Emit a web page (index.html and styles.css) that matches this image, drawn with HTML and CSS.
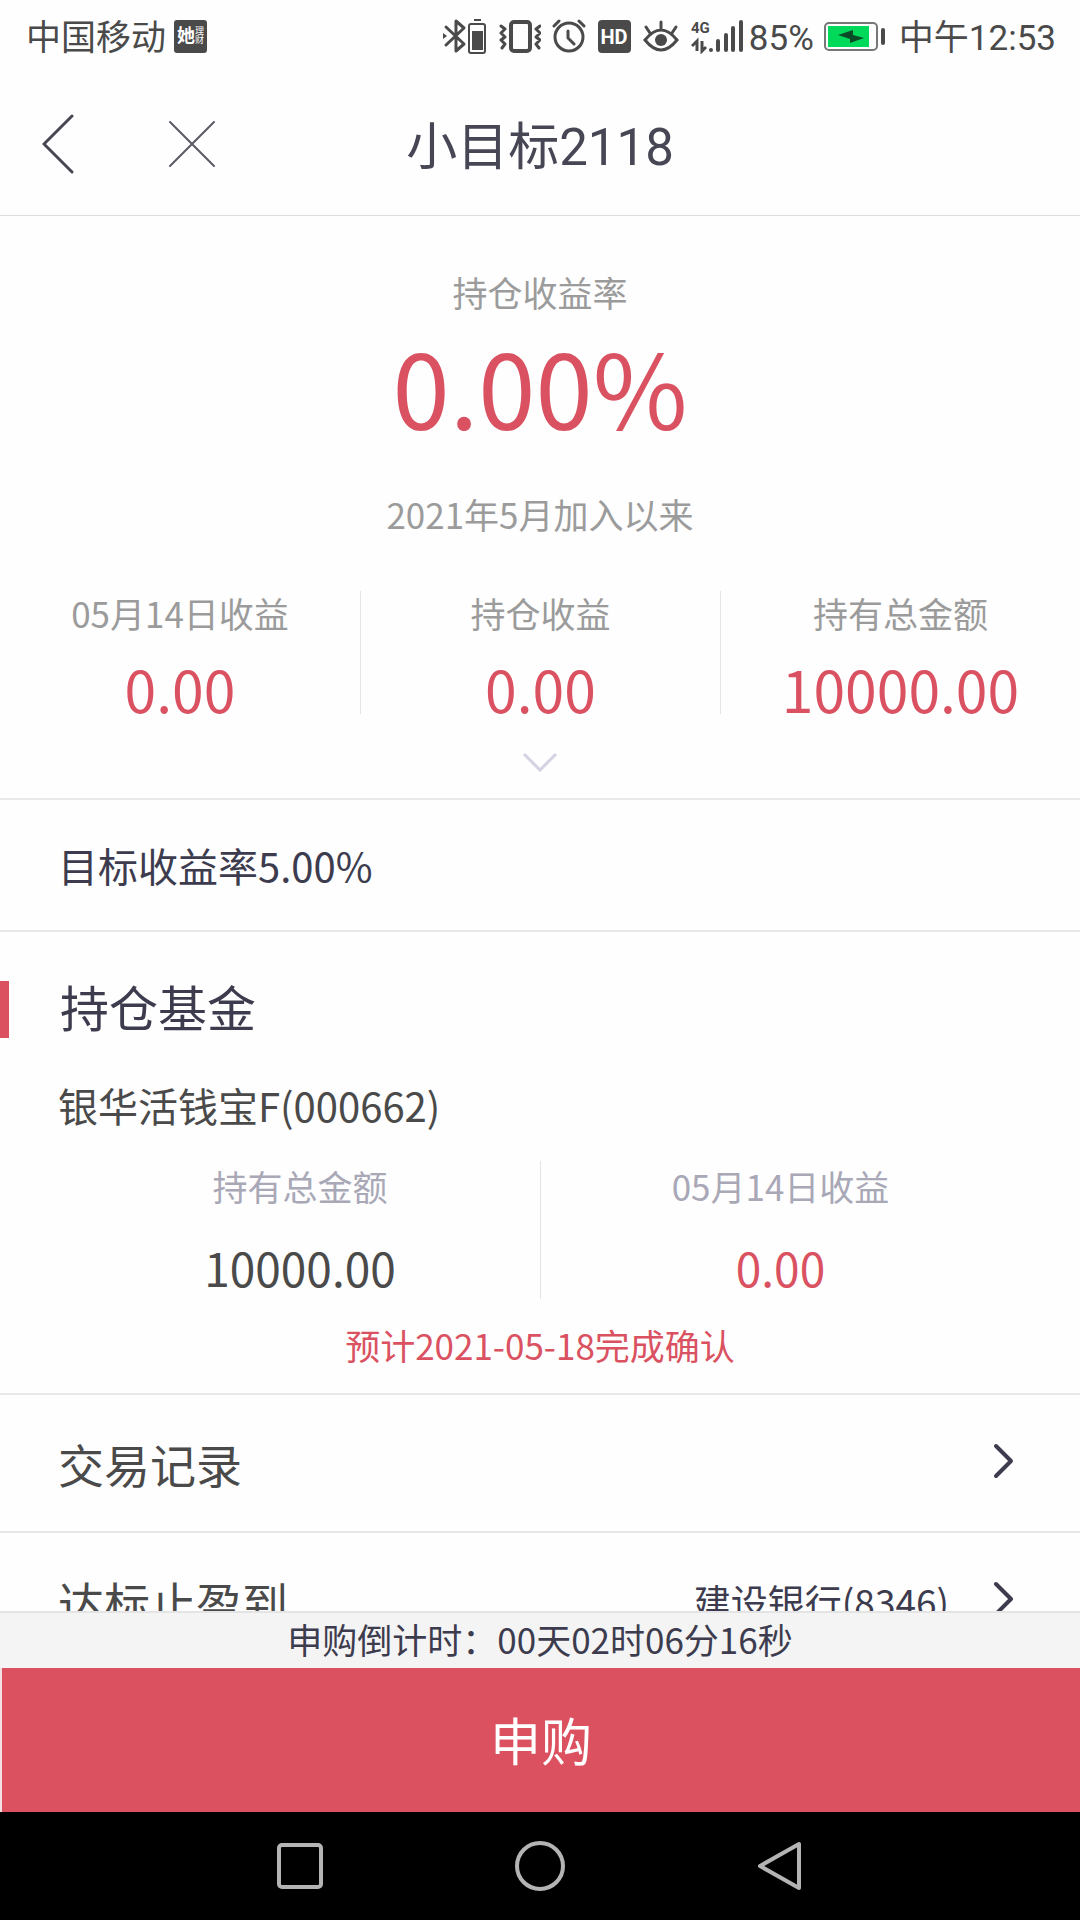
FILE: index.html
```html
<!DOCTYPE html>
<html lang="zh-CN">
<head>
<meta charset="utf-8">
<meta name="viewport" content="width=device-width, initial-scale=1">
<title>小目标2118</title>
<link rel="stylesheet" href="styles.css">
</head>
<body>
<div class="app">
  <div class="status">
    <span>中国移动</span>
    <span class="badge"><b class="badge-main">她</b><span class="badge-side"><span>理</span><span>财</span></span></span>
    <div class="status-icons">
      <svg width="46" height="36" viewBox="0 0 46 36" fill="none" stroke="#4a4a4a">
        <path d="M4 9 22 26 14 33V3L22 10 4 27" stroke-width="3" stroke-linejoin="round" stroke-linecap="round"/>
        <path d="M1 15l4 3-4 3z" fill="#4a4a4a" stroke="none"/>
        <rect x="27" y="6" width="16" height="29" rx="2" stroke-width="2"/>
        <path d="M32 2h7" stroke-width="2"/>
        <path d="M30 13h11v19H30z" fill="#4a4a4a" stroke="none"/>
      </svg>
      <svg width="42" height="36" viewBox="0 0 42 36" fill="none" stroke="#4a4a4a" stroke-width="3" stroke-linecap="round" stroke-linejoin="round">
        <rect x="12" y="4" width="19" height="29" rx="3" stroke-width="4"/>
        <path d="M2 8l4 3-4 4 4 4-4 3 4 4-3 4M41 8l-4 3 4 4-4 4 4 3-4 4 3 4"/>
      </svg>
      <svg width="34" height="36" viewBox="0 0 34 36" fill="none" stroke="#4a4a4a" stroke-width="3" stroke-linecap="round">
        <circle cx="17" cy="19" r="14"/>
        <path d="M2 8 7 3M32 8 27 3M16 13v7l6 6"/>
      </svg>
      <svg width="34" height="36" viewBox="0 0 34 36">
        <rect x="1" y="2" width="33" height="33" rx="4" fill="#4a4a4a"/>
        <text x="17" y="26" class="hd">HD</text>
      </svg>
      <svg width="38" height="36" viewBox="0 0 38 36" fill="none" stroke="#4a4a4a" stroke-width="3" stroke-linecap="round">
        <path d="M3 22Q19 2 35 22Q19 42 3 22zM19 11V4M8 15 4 9M30 15l4-6"/>
        <circle cx="19" cy="22" r="6" fill="#4a4a4a" stroke="none"/>
      </svg>
      <svg width="52" height="36" viewBox="0 0 52 36" fill="none" stroke="#4a4a4a" stroke-width="4" stroke-linecap="round">
        <text x="0" y="15" class="net">4G</text>
        <path d="M20 32v0M27 32v-9M35 32V17M42 32V10M50 32V4"/>
        <path d="M6 33V23L1 28M11 23v10l4-4" stroke-width="3" stroke-linecap="butt"/>
      </svg>
    </div>
    <span class="percent">85%</span>
    <svg class="battery" width="61" height="30" viewBox="0 0 61 30">
      <rect x="1" y="1" width="52" height="27" rx="4" fill="none" stroke="#777" stroke-width="2"/>
      <path d="M4 4h41v21H4z" fill="#00d95a"/>
      <path d="M59 8v13" stroke="#4a4a4a" stroke-width="4" stroke-linecap="round"/>
      <path d="M14 13 26 17V21L40 16 29 13V8z" fill="#0b4a26"/>
    </svg>
    <span>中午12:53</span>
  </div>

  <header class="bar">
    <div class="bar-side">
      <button class="icon-button" aria-label="返回">
        <svg width="34" height="62" viewBox="0 0 34 62" fill="none" stroke="#464655" stroke-width="3" stroke-linecap="round" stroke-linejoin="round"><path d="M32 3 4 31 32 59"/></svg>
      </button>
      <button class="icon-button" aria-label="关闭">
        <svg width="48" height="48" viewBox="0 0 48 48" fill="none" stroke="#5a5a66" stroke-width="2" stroke-linecap="round"><path d="M2 2 46 46M46 2 2 46"/></svg>
      </button>
    </div>
    <h1 class="title">小目标2118</h1>
    <div class="bar-side"></div>
  </header>

  <main class="content">
    <section class="summary">
      <p class="label">持仓收益率</p>
      <p class="rate">0.00%</p>
      <p class="label since">2021年5月加入以来</p>
      <dl class="stats">
        <div class="stat"><dt>05月14日收益</dt><dd>0.00</dd></div>
        <div class="stat"><dt>持仓收益</dt><dd>0.00</dd></div>
        <div class="stat"><dt>持有总金额</dt><dd>10000.00</dd></div>
      </dl>
      <button class="expand" aria-label="展开">
        <svg width="36" height="20" viewBox="0 0 36 20" fill="none" stroke="#d3d3e2" stroke-width="3"><path d="M2 2 18 18 34 2"/></svg>
      </button>
    </section>

    <p class="target">目标收益率5.00%</p>

    <section class="fund">
      <h2 class="heading">持仓基金</h2>
      <h3 class="fund-name">银华活钱宝F(000662)</h3>
      <dl class="holdings">
        <div class="holding"><dt>持有总金额</dt><dd>10000.00</dd></div>
        <div class="holding gain"><dt>05月14日收益</dt><dd>0.00</dd></div>
      </dl>
      <p class="note">预计2021-05-18完成确认</p>
    </section>

    <a class="row" href="#records">
      <span class="row-title">交易记录</span>
      <svg width="22" height="40" viewBox="0 0 22 40" fill="none" stroke="#3d3c4e" stroke-width="4" stroke-linecap="round" stroke-linejoin="round"><path d="M3 3 18 18 3 33"/></svg>
    </a>
    <a class="row" href="#payout">
      <span class="row-title">达标止盈到</span>
      <span class="row-value">建设银行(8346)</span>
      <svg width="22" height="40" viewBox="0 0 22 40" fill="none" stroke="#3d3c4e" stroke-width="4" stroke-linecap="round" stroke-linejoin="round"><path d="M3 3 18 18 3 33"/></svg>
    </a>
  </main>

  <footer class="footer">
    <p class="countdown">申购倒计时：00天02时06分16秒</p>
    <button class="buy">申购</button>
  </footer>

  <nav class="system-nav">
    <button class="icon-button" aria-label="最近任务">
      <svg width="52" height="52" viewBox="0 0 52 52" fill="none" stroke="#b4b4b4" stroke-width="4"><rect x="5" y="5" width="42" height="42" rx="3"/></svg>
    </button>
    <button class="icon-button" aria-label="主屏幕">
      <svg width="52" height="52" viewBox="0 0 52 52" fill="none" stroke="#b4b4b4" stroke-width="4"><circle cx="26" cy="26" r="23"/></svg>
    </button>
    <button class="icon-button" aria-label="返回上一页">
      <svg width="52" height="52" viewBox="0 0 52 52" fill="none" stroke="#b4b4b4" stroke-width="4" stroke-linejoin="round"><path d="M45 4V48L6 26z"/></svg>
    </button>
  </nav>
</div>
</body>
</html>
```
FILE: styles.css
```css
* {
  box-sizing: border-box;
  margin: 0;
  padding: 0;
}

body {
  background: #fefefe;
  color: #4a4a4a;
  font-family: "Noto Sans CJK SC", sans-serif;
  font-size: 35px;
  line-height: 52px;
}

h1, h2, h3 {
  font-weight: 400;
}

button {
  border: 0;
  background: none;
  color: inherit;
  font: inherit;
}

svg {
  display: block;
  flex: none;
}

.app {
  display: flex;
  flex-direction: column;
  height: 100vh;
}

/* Phone status bar */
.status {
  display: flex;
  align-items: center;
  height: 72px;
  padding: 0 24px 0 26px;
  font-family: Roboto, "Noto Sans CJK SC", sans-serif;
  white-space: nowrap;
}

.status > span:not(.badge) {
  padding-top: 5px;
}

.badge {
  display: flex;
  align-items: center;
  justify-content: center;
  width: 33px;
  height: 33px;
  margin-left: 8px;
  border-radius: 3px;
  background: #4a4a4a;
  color: #fff;
}

.badge-main {
  font-size: 18px;
  line-height: 20px;
}

.badge-side {
  display: flex;
  flex-direction: column;
  font-size: 9px;
  line-height: 9px;
}

.status-icons {
  display: flex;
  gap: 11px;
  margin-left: auto;
}

.hd {
  fill: #fff;
  font: 700 20px Roboto, sans-serif;
  text-anchor: middle;
}

.net {
  fill: #4a4a4a;
  stroke: none;
  font: 700 15px Roboto, sans-serif;
}

.percent {
  margin-left: 6px;
}

.battery {
  margin: 2px 14px 0 10px;
}

/* Title bar */
.bar {
  display: flex;
  align-items: center;
  height: 144px;
  padding: 0 40px;
  border-bottom: 1px solid #ddd;
  color: #464655;
}

.bar-side {
  display: flex;
  flex: 1;
  align-items: center;
  gap: 94px;
}

.title {
  padding-top: 8px;
  font-family: Roboto, "Noto Sans CJK SC", sans-serif;
  font-size: 51px;
  line-height: 64px;
}

.content {
  flex: 1;
  min-height: 0;
  overflow-y: auto;
  scrollbar-width: none;
}

/* Returns summary */
.summary {
  padding-top: 50px;
  border-bottom: 2px solid #e8e8e8;
  color: #9b9b9b;
  text-align: center;
}

.rate {
  margin-top: 8px;
  color: #da5261;
  font-size: 103px;
  line-height: 120px;
}

.since {
  margin-top: 42px;
}

.stats {
  display: grid;
  grid-template-columns: repeat(3, 1fr);
  margin-top: 51px;
}

.stat + .stat,
.holding + .holding {
  border-left: 1px solid #e4e4e4;
}

.stat dt {
  line-height: 44px;
}

.stat dd {
  margin-top: 27px;
  color: #da5261;
  font-size: 57px;
  line-height: 52px;
}

.expand {
  display: block;
  margin: 0 auto;
  padding: 38px 0 26px;
}

.target {
  padding: 39px 58px;
  border-bottom: 2px solid #e8e8e8;
  color: #3d3c4e;
  font-size: 40px;
}

/* Fund holdings */
.fund {
  padding: 49px 0 22px;
  border-bottom: 2px solid #e8e8e8;
}

.heading {
  height: 57px;
  padding-left: 51px;
  border-left: 9px solid #dc5160;
  color: #3d3c4e;
  font-size: 49px;
  line-height: 50px;
}

.fund-name {
  margin-top: 41px;
  padding: 0 58px;
  font-size: 40px;
}

.holdings {
  display: grid;
  grid-template-columns: 1fr 1fr;
  margin-top: 30px;
  padding: 0 60px;
  text-align: center;
}

.holding dt {
  color: #a9a8b7;
  line-height: 50px;
}

.holding dd {
  margin-top: 24px;
  font-size: 46px;
  line-height: 64px;
}

.gain dd,
.note {
  color: #da5261;
}

.note {
  margin-top: 20px;
  text-align: center;
}

.row {
  display: flex;
  align-items: center;
  padding: 36px 65px 36px 58px;
  border-bottom: 2px solid #e8e8e8;
  color: #4a4a4a;
  line-height: 64px;
  text-decoration: none;
}

.row-title {
  margin-right: auto;
  font-size: 46px;
}

.row-value {
  margin-right: 44px;
  color: #3d3c4e;
  font-size: 37px;
}

/* Purchase footer */
.footer {
  border-top: 2px solid #e4e4e4;
}

.countdown {
  padding-bottom: 3px;
  background: #f4f4f4;
  color: #3d3c4e;
  text-align: center;
}

.buy {
  display: block;
  width: 100%;
  height: 144px;
  padding-bottom: 2px;
  border-left: 2px solid #f4dfe2;
  background: #dc5160;
  color: #fff;
  font-size: 51px;
}

.system-nav {
  display: flex;
  align-items: center;
  justify-content: center;
  gap: 188px;
  height: 108px;
  background: #000;
}
```
